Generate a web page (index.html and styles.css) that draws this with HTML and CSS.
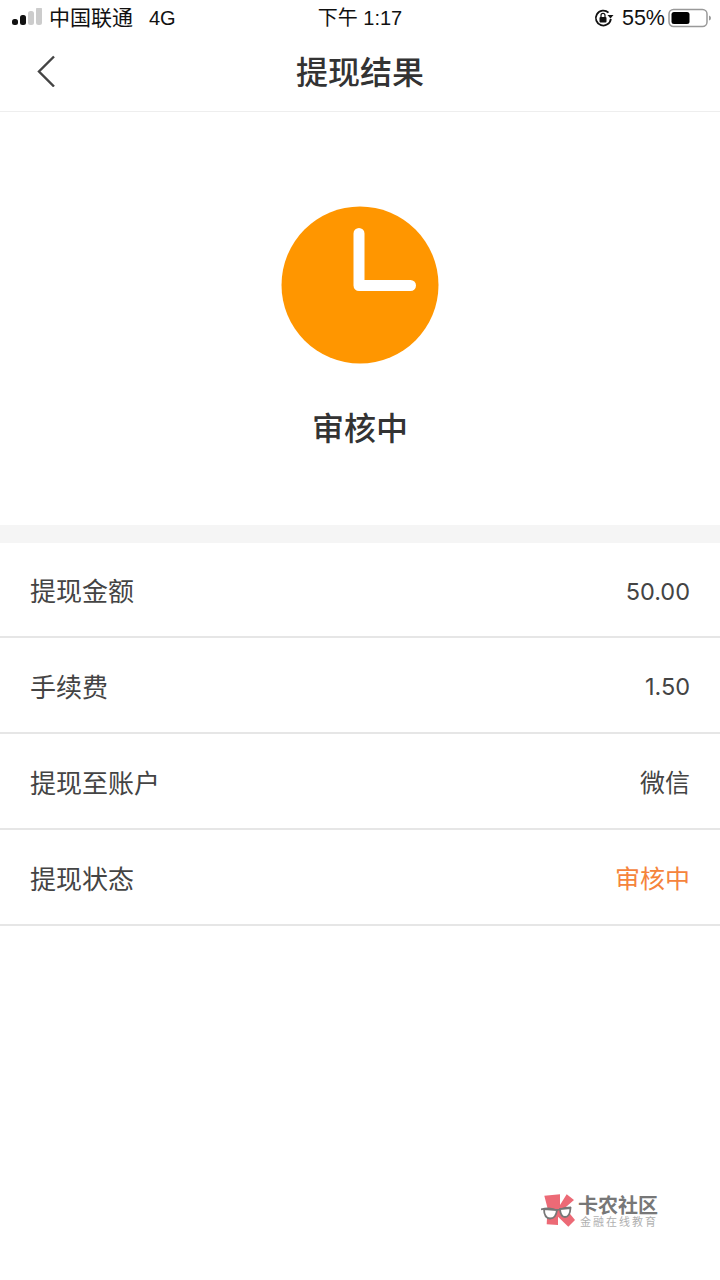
FILE: index.html
```html
<!DOCTYPE html>
<html lang="zh">
<head>
<meta charset="utf-8">
<title>提现结果</title>
<link rel="stylesheet" href="styles.css">
</head>
<body>
<div class="status-bar">
  <div class="sb-left">
    <svg class="signal" width="32" height="20" viewBox="0 0 32 20"><rect x="0" y="11" width="6" height="6" rx="2.500" fill="#111"/><rect x="8" y="7" width="6" height="10" rx="2.500" fill="#111"/><rect x="16" y="3" width="6" height="14" rx="2.500" fill="#ccc"/><rect x="24" y="-1" width="6" height="18" rx="2.500" fill="#ccc"/></svg>
    <span class="carrier">中国联通</span>
    <span class="net">4G</span>
  </div>
  <div class="sb-time">下午 1:17</div>
  <div class="sb-right">
    <svg width="20" height="20" viewBox="0 0 20 20"><path d="M16.800 10.800a7.500 7.500 0 1 1-2.300-6.200" fill="none" stroke="#111" stroke-width="1.800"/><path d="M13.500 7h6l-3 3.500z" fill="#111"/><rect x="5.500" y="9" width="7" height="5.500" rx="1" fill="#111"/><path d="M7 9V7.400a2 2 0 0 1 4 0V9" fill="none" stroke="#111" stroke-width="1.200"/></svg>
    <span class="pct">55%</span>
    <svg width="44" height="20" viewBox="0 0 44 20"><rect x="1" y="1.500" width="38" height="17" rx="4.500" fill="none" stroke="#999" stroke-width="1.500"/><rect x="3.500" y="4" width="18" height="12" rx="2.500" fill="#000"/><path d="M41 7.500q2 .5 2 2.500t-2 2.500z" fill="#999"/></svg>
  </div>
</div>
<header class="nav">
  <svg class="back" width="20" height="32" viewBox="0 0 20 32"><path d="M18 1.500 3 16.500l15 15" fill="none" stroke="#444" stroke-width="2.400"/></svg>
  <h1 class="nav-title">提现结果</h1>
</header>
<section class="result">
  <svg class="clock" width="158" height="158" viewBox="0 0 158 158"><circle cx="79" cy="79" r="78.500" fill="#ff9600"/><path d="M78 27.500V79.500H129.500" fill="none" stroke="#fff" stroke-width="11" stroke-linecap="round" stroke-linejoin="round"/></svg>
  <div class="result-text">审核中</div>
</section>
<section class="list">
  <div class="row"><span>提现金额</span><span class="val num">50.00</span></div>
  <div class="row"><span>手续费</span><span class="val num">1.50</span></div>
  <div class="row"><span>提现至账户</span><span class="val">微信</span></div>
  <div class="row"><span>提现状态</span><span class="val state">审核中</span></div>
</section>
<div class="watermark">
  <svg class="wm-logo" width="38" height="36" viewBox="0 0 38 36"><path d="M3.300 3.700 19 2.300V13L25.700 2.300 33 8 24 15.700 34 28l-6.700 6.700L17 24.700 17 33l-11.300-.7L6.500 16z" fill="#ec6a76"/><path d="M0 17.500q6-2 12-.5 4 1.500 7 .5 5-2 11-2" fill="none" stroke="#777" stroke-width="1.800"/><path d="M3 17q0 9 6 9.500 6 0 7-8.500z" fill="#fff" stroke="#777" stroke-width="1.800"/><path d="M19 17q.5 8 5 8 5 0 5.500-9z" fill="#fff" stroke="#777" stroke-width="1.800"/></svg>
  <div class="wm-text">
    <div class="wm-main">卡农社区</div>
    <div class="wm-sub">金融在线教育</div>
  </div>
</div>
</body>
</html>
```

FILE: styles.css
```css
* { box-sizing: border-box; }
html, body { margin: 0; padding: 0; }
body {
  width: 720px;
  height: 1280px;
  background: #fff;
  font-family: "Noto Sans CJK SC", "Liberation Sans", sans-serif;
  color: #333;
  overflow: hidden;
  position: relative;
}
.status-bar {
  height: 36px;
  display: grid;
  grid-template-columns: 1fr auto 1fr;
  align-items: center;
  color: #111;
  font-size: 21px;
  line-height: 36px;
  font-family: "Liberation Sans", "Noto Sans CJK SC", sans-serif;
}
.sb-left { display: flex; align-items: center; padding-left: 12px; }
.signal { margin-right: 5px; }
.carrier { margin-right: 16px; }
.net { font-size: 20px; }
.sb-time { font-size: 20px; }
.sb-right { display: flex; align-items: center; justify-content: flex-end; padding-right: 8px; gap: 3px; }
.pct { font-size: 21.500px; margin-left: 5px; }
.nav {
  height: 76px;
  display: flex;
  align-items: center;
  justify-content: center;
  position: relative;
  border-bottom: 1px solid #eee;
}
.back { position: absolute; left: 36px; top: 19px; }
.nav-title { margin: 0 0 8px; font-size: 32px; font-weight: 500; color: #333; line-height: 1; }
.result {
  height: 431px;
  border-bottom: 18px solid #f5f5f5;
  display: flex;
  flex-direction: column;
  align-items: center;
  padding-top: 94px;
}
.clock { display: block; }
.result-text { margin-top: 42px; font-size: 32px; font-weight: 500; line-height: 40px; color: #333; }
.list { display: flex; flex-direction: column; }
.row {
  height: 96px;
  padding: 0 30px;
  display: flex;
  align-items: center;
  justify-content: space-between;
  border-bottom: 2px solid #e6e6e6;
  font-size: 26px;
  color: #444;
}
.row:first-child { height: 95px; }
.val { font-size: 25px; }
.num { font-family: Inter, "Liberation Sans", sans-serif; font-size: 23.500px; padding-top: 3px; }
.state { color: #f5843c; }
.watermark {
  position: absolute;
  left: 541px;
  top: 1192px;
  display: flex;
  align-items: flex-start;
}
.wm-logo { margin-right: -1px; }
.wm-text { display: flex; flex-direction: column; align-items: flex-start; padding-top: 3px; }
.wm-main { font-size: 20px; line-height: 20px; font-weight: 700; color: #777; }
.wm-sub { font-size: 11px; line-height: 13px; letter-spacing: 2px; color: #b0b0b0; margin-left: 2px; }
```
